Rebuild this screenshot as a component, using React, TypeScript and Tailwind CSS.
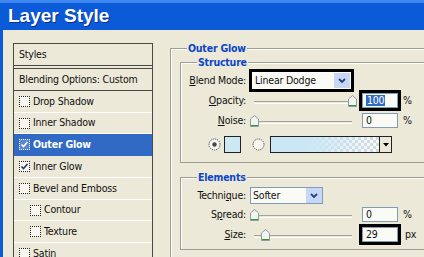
import React from "react";

const uiFont = "font-['DejaVu_Sans_Condensed','Liberation_Sans',sans-serif]";

type StyleItem = {
  name: string;
  check?: boolean;
  checked?: boolean;
  indent?: boolean;
  selected?: boolean;
  h: string;
};

const styleItems: StyleItem[] = [
  { name: "Drop Shadow", check: true, h: "h-[22px]" },
  { name: "Inner Shadow", check: true, h: "h-[21px]" },
  { name: "Outer Glow", check: true, checked: true, selected: true, h: "h-[22px]" },
  { name: "Inner Glow", check: true, checked: true, h: "h-[22px]" },
  { name: "Bevel and Emboss", check: true, h: "h-[22px]" },
  { name: "Contour", check: true, indent: true, h: "h-[21px]" },
  { name: "Texture", check: true, indent: true, h: "h-[22px]" },
  { name: "Satin", check: true, h: "h-[22px]" },
];

const CheckBox = ({ checked, selected }: { checked?: boolean; selected?: boolean }) => (
  <span
    className={`w-[11px] h-[11px] shrink-0 border border-dotted flex items-center justify-center ${
      selected ? "border-white bg-[#5b86d4]" : "border-[#222] bg-[#f7f6f0]"
    }`}
  >
    {checked && (
      <svg width="9" height="9" viewBox="0 0 9 9">
        <path d="M1.5 4.5 L3.5 6.5 L7.5 2" fill="none" stroke={selected ? "#fff" : "#21386b"} strokeWidth="1.6" />
      </svg>
    )}
  </span>
);

const Label = ({ text, k }: { text: string; k: number }) => (
  <span className="w-[65px] shrink-0 text-right">
    {text.slice(0, k)}
    <span className="underline underline-offset-1">{text[k]}</span>
    {text.slice(k + 1)}:
  </span>
);

const Slider = ({ value, max }: { value: number; max: number }) => (
  <div className="relative w-[114px] h-full shrink-0">
    <div className="absolute left-[6px] right-[10px] top-1/2 h-[3px] border-t border-[#a4a397] border-b border-b-white" />
    <svg
      className="absolute top-[calc(50%-6px)]"
      style={{ left: 6 + (value / max) * 98 - 4 }}
      width="9"
      height="12"
      viewBox="0 0 9 12"
    >
      <path d="M0.5 4 L4.5 0.5 L8.5 4 L8.5 11.5 L0.5 11.5 Z" fill="#f4f4ef" stroke="#8e9aa8" />
      <path d="M1 10.5 H8" stroke="#2d9a2d" strokeWidth="1" />
    </svg>
  </div>
);

const ValueBox = ({ value, highlight, selected }: { value: string; highlight?: boolean; selected?: boolean }) => (
  <div
    className={`w-[36px] h-[15px] shrink-0 border border-[#7f9db9] bg-[#fbfbf6] flex items-center pl-[3px] leading-none ${
      highlight ? "ring-3 ring-black" : ""
    }`}
  >
    <span className={selected ? "bg-[#316ac5] text-white px-[1px]" : ""}>{value}</span>
  </div>
);

const Combo = ({ value, w, highlight }: { value: string; w: string; highlight?: boolean }) => (
  <div
    className={`${w} h-full shrink-0 border border-[#7f9db9] bg-[#fbfbf6] flex items-center ${
      highlight ? "ring-3 ring-black border-white" : ""
    }`}
  >
    <span className="flex-1 pl-[2px] leading-none">{value}</span>
    <span className="w-[16px] h-full bg-[#c7d7f6] flex items-center justify-center">
      <svg width="8" height="6" viewBox="0 0 8 6">
        <path d="M1 1 L4 4 L7 1" fill="none" stroke="#28427f" strokeWidth="1.8" />
      </svg>
    </span>
  </div>
);

const Radio = ({ checked }: { checked?: boolean }) => (
  <svg width="13" height="13" viewBox="0 0 13 13" className="shrink-0">
    <circle cx="6.5" cy="6.5" r="5.5" fill="#f7f6f0" stroke="#333" strokeDasharray="1 1" />
    {checked && <circle cx="6.5" cy="6.5" r="2.2" fill="#444" />}
  </svg>
);

const GroupBox = ({ title, className, children }: { title: string; className: string; children?: React.ReactNode }) => (
  <div className={`relative border-[#9f9e94] shadow-[inset_1px_1px_0_#fff] ${className}`}>
    <span className="absolute left-[16px] -top-[8px] bg-[#ece9d8] px-[1px] font-bold text-[#0c46c8] leading-[14px]">
      {title}
    </span>
    {children}
  </div>
);

export default function App() {
  return (
    <div
      className={`w-[424px] h-[257px] overflow-hidden bg-[#ece9d8] flex flex-col text-[10.5px] tracking-[-0.2px] text-[#111] ${uiFont}`}
    >
      {/* title bar */}
      <div className="h-[30px] shrink-0 bg-[#0b5bd9] border-t-[3px] border-[#3d86f0] flex items-center pl-[8px]">
        <span className="font-['Liberation_Sans',sans-serif] font-bold text-[19px] tracking-normal text-white [text-shadow:1px_1px_0_#0a2f8a]">
          Layer Style
        </span>
      </div>

      <div className="flex-1 flex border-l-[3px] border-[#0b5bd9] overflow-hidden">
        {/* styles list */}
        <div className="ml-[10px] mt-[13px] w-[140px] shrink-0 border-t border-l border-r border-[#4a4a44] flex flex-col">
          <div className="h-[22px] shrink-0 border-b border-[#4a4a44] flex items-center pl-[5px]">Styles</div>
          <div className="h-[2px] shrink-0" />
          <div className="h-[23px] shrink-0 border-t border-b border-[#4a4a44] flex items-center pl-[5px]">
            Blending Options: Custom
          </div>
          {styleItems.map((item) => (
            <div
              key={item.name}
              className={`${item.h} shrink-0 flex items-center gap-[3px] border-b ${
                item.selected ? "bg-[#316ac5] text-white font-bold border-[#316ac5]" : "border-white"
              } ${item.indent ? "pl-[16px]" : "pl-[5px]"}`}
            >
              <CheckBox checked={item.checked} selected={item.selected} />
              <span>{item.name}</span>
            </div>
          ))}
        </div>

        {/* settings */}
        <div className="ml-[17px] mt-[18px] w-[300px] shrink-0">
          <GroupBox title="Outer Glow" className="border-l border-t h-[240px] pl-[9px] pt-[13px]">
            <GroupBox title="Structure" className="border h-[101px] flex flex-col">
              <div className="mt-[9px] h-[17px] flex items-center">
                <Label text="Blend Mode" k={0} />
                <span className="w-[6px] shrink-0" />
                <Combo value="Linear Dodge" w="w-[99px]" highlight />
              </div>
              <div className="mt-[3px] h-[17px] flex items-center">
                <Label text="Opacity" k={0} />
                <span className="w-[2px] shrink-0" />
                <Slider value={100} max={100} />
                <ValueBox value="100" highlight selected />
                <span className="ml-[5px]">%</span>
              </div>
              <div className="mt-[4px] h-[15px] flex items-center">
                <Label text="Noise" k={0} />
                <span className="w-[2px] shrink-0" />
                <Slider value={0} max={100} />
                <ValueBox value="0" />
                <span className="ml-[5px]">%</span>
              </div>
              <div className="mt-[8px] h-[17px] flex items-center pl-[27px]">
                <Radio checked />
                <span className="ml-[3px] w-[17px] h-[17px] border border-[#222] bg-[#cde8f5]" />
                <span className="ml-[11px]">
                  <Radio />
                </span>
                <div className="ml-[5px] w-[122px] h-[17px] border border-[#222] flex">
                  <div className="relative flex-1 bg-[image:repeating-conic-gradient(#d6d6d6_0_25%,#ffffff_0_50%)] bg-[length:6px_6px]">
                    <div className="absolute inset-0 bg-[linear-gradient(to_right,#cbe7f6,#cbe7f6_35%,rgba(203,231,246,0.15))]" />
                  </div>
                  <span className="w-[12px] border-l border-[#222] bg-[#ece9d8] flex items-center justify-center">
                    <svg width="6" height="4" viewBox="0 0 6 4">
                      <path d="M0 0 H6 L3 3.5 Z" fill="#000" />
                    </svg>
                  </span>
                </div>
              </div>
            </GroupBox>

            <GroupBox title="Elements" className="mt-[14px] border h-[73px] flex flex-col">
              <div className="mt-[9px] h-[17px] flex items-center">
                <Label text="Technique" k={6} />
                <span className="w-[4px] shrink-0" />
                <Combo value="Softer" w="w-[73px]" />
              </div>
              <div className="mt-[3px] h-[15px] flex items-center">
                <Label text="Spread" k={1} />
                <span className="w-[2px] shrink-0" />
                <Slider value={0} max={100} />
                <ValueBox value="0" />
                <span className="ml-[5px]">%</span>
              </div>
              <div className="mt-[5px] h-[15px] flex items-center">
                <Label text="Size" k={0} />
                <span className="w-[2px] shrink-0" />
                <Slider value={29} max={250} />
                <ValueBox value="29" highlight />
                <span className="ml-[7px]">px</span>
              </div>
            </GroupBox>
          </GroupBox>
        </div>
      </div>
    </div>
  );
}
